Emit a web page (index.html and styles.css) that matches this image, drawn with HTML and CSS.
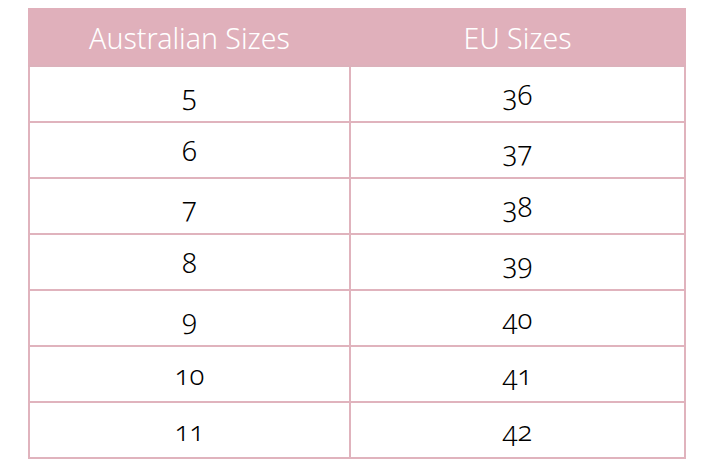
FILE: index.html
```html
<!DOCTYPE html>
<html>
<head>
<meta charset="utf-8">
<link rel="stylesheet" href="styles.css">
</head>
<body>
<table class="sizes">
  <colgroup><col class="c1"><col class="c2"></colgroup>
  <thead>
    <tr><th>Australian Sizes</th><th>EU Sizes</th></tr>
  </thead>
  <tbody>
    <tr><td>5</td><td>36</td></tr>
    <tr><td>6</td><td>37</td></tr>
    <tr><td>7</td><td>38</td></tr>
    <tr><td>8</td><td>39</td></tr>
    <tr><td>9</td><td>40</td></tr>
    <tr><td>10</td><td>41</td></tr>
    <tr><td>11</td><td>42</td></tr>
  </tbody>
</table>
</body>
</html>
```
FILE: styles.css
```css
html, body { margin: 0; padding: 0; background: #fff; }
body { padding: 8px 0 0 28px; }
.sizes {
  border-collapse: collapse;
  table-layout: fixed;
  width: 656px;
  font-family: "Noto Sans", "Open Sans", sans-serif;
  font-variant-numeric: oldstyle-nums;
}
.c1 { width: 321px; }
.c2 { width: 335px; }
.sizes th {
  background: #e0b0bb;
  color: #fff;
  font-weight: 300;
  font-size: 28.5px;
  height: 55px;
  padding: 0;
  border: 2px solid #e0b0bb;
  border-bottom: 2px solid #dcb1bb;
}
.sizes td {
  border: 2px solid #e0b3bd;
  height: 54px;
  padding: 0;
  text-align: center;
  font-size: 27.5px;
  font-weight: 300;
  color: #000;
}
```
